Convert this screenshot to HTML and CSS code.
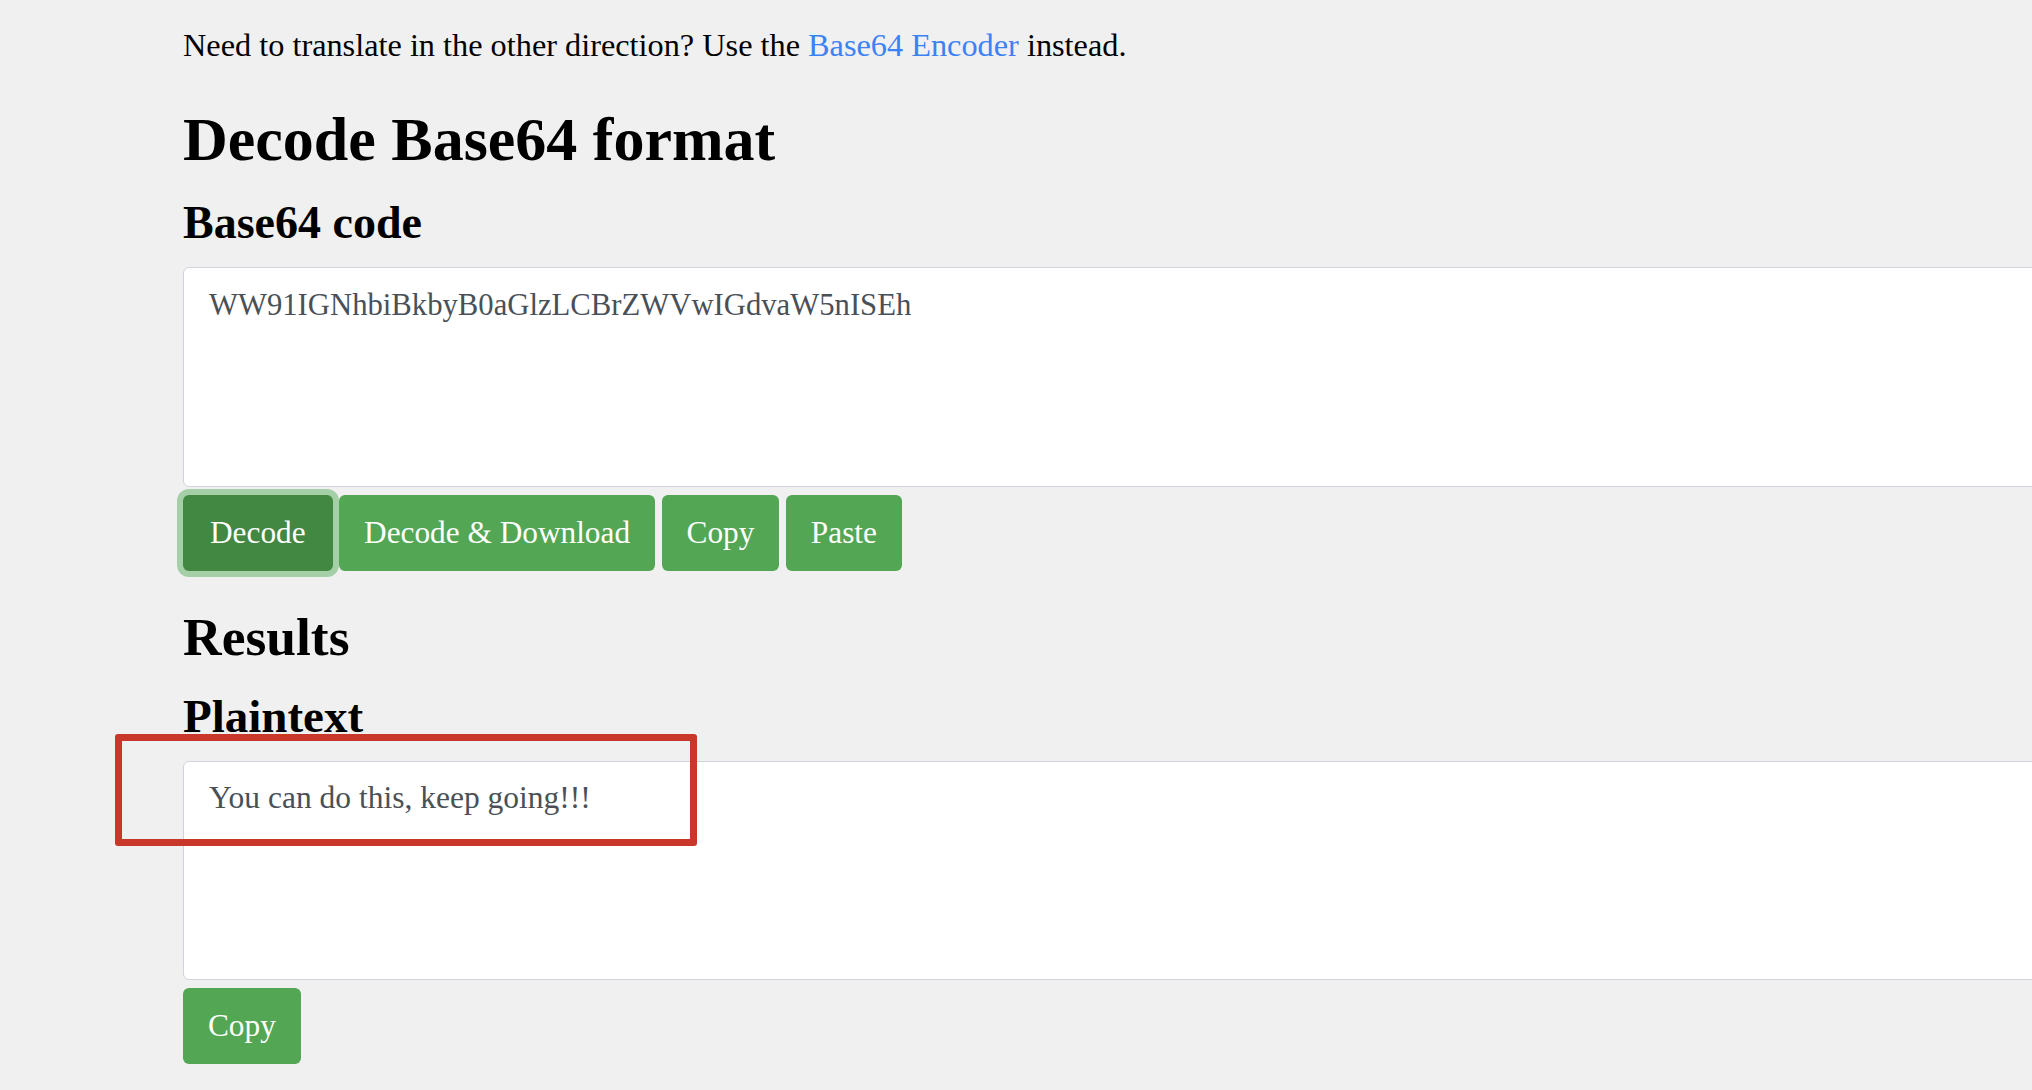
FILE: index.html
```html
<!DOCTYPE html>
<html lang="en">
<head>
<meta charset="utf-8">
<title>Decode Base64</title>
<link rel="stylesheet" href="styles.css">
</head>
<body>
<main class="page">
  <p class="intro">Need to translate in the other direction? Use the <a href="#" class="link">Base64 Encoder</a> instead.</p>
  <h1 class="title">Decode Base64 format</h1>
  <h3 class="subtitle">Base64 code</h3>
  <textarea class="field">WW91IGNhbiBkbyB0aGlzLCBrZWVwIGdvaW5nISEh</textarea>
  <div class="actions">
    <button class="btn btn-active" type="button">Decode</button>
    <button class="btn" type="button">Decode &amp; Download</button>
    <button class="btn" type="button">Copy</button>
    <button class="btn" type="button">Paste</button>
  </div>
  <h2 class="section">Results</h2>
  <h3 class="subtitle subtitle-lg">Plaintext</h3>
  <div class="field-wrap">
    <textarea class="field field-out">You can do this, keep going!!!</textarea>
    <div class="highlight"></div>
  </div>
  <div class="actions">
    <button class="btn" type="button">Copy</button>
  </div>
</main>
</body>
</html>
```
FILE: styles.css
```css
html, body {
  margin: 0;
  padding: 0;
  overflow: hidden;
  background: #f0f0f0;
}

body {
  font-family: "Liberation Serif", "Times New Roman", serif;
  color: #000;
}

.page {
  width: 1900px;
  padding-left: 183px;
}

.intro {
  margin: 23px 0 0;
  font-size: 32.3px;
  line-height: 45px;
}

.link {
  color: #3c82f4;
  text-decoration: none;
}

.title {
  margin: 34px 0 19px;
  font-size: 62px;
  line-height: 74px;
  font-weight: 700;
}

.subtitle {
  margin: 0 0 17px;
  font-size: 46px;
  line-height: 55px;
  font-weight: 700;
}

.subtitle-lg {
  font-size: 47px;
  line-height: 56px;
}

.section {
  margin: 34px 0 19px;
  font-size: 53.5px;
  line-height: 64px;
  font-weight: 700;
}

.field {
  display: block;
  box-sizing: border-box;
  width: 100%;
  height: 220px;
  margin: 0;
  padding: 15px 25px;
  border: 1px solid #ced4da;
  border-radius: 6px;
  background: #fff;
  color: #495057;
  font-family: "Liberation Serif", "Times New Roman", serif;
  font-size: 30.7px;
  line-height: 45px;
  resize: none;
  outline: none;
}

.field-out {
  height: 219px;
  padding-top: 13px;
  font-size: 31.5px;
}

.field-wrap {
  position: relative;
}

.highlight {
  position: absolute;
  left: -68px;
  top: -27px;
  width: 582px;
  height: 112px;
  box-sizing: border-box;
  border: 7px solid #c8372a;
  border-radius: 3px;
  pointer-events: none;
}

.actions {
  display: flex;
  gap: 6.5px;
  margin-top: 8px;
}

.btn {
  height: 76px;
  padding: 0 25px;
  border: 0;
  border-radius: 6px;
  background: #53a653;
  color: #fff;
  font-family: "Liberation Serif", "Times New Roman", serif;
  font-size: 31.3px;
  line-height: 76px;
  cursor: pointer;
}

.btn-active {
  background: #428742;
  box-shadow: 0 0 0 6px #a5cfa6;
  padding: 0 27px;
}
```
